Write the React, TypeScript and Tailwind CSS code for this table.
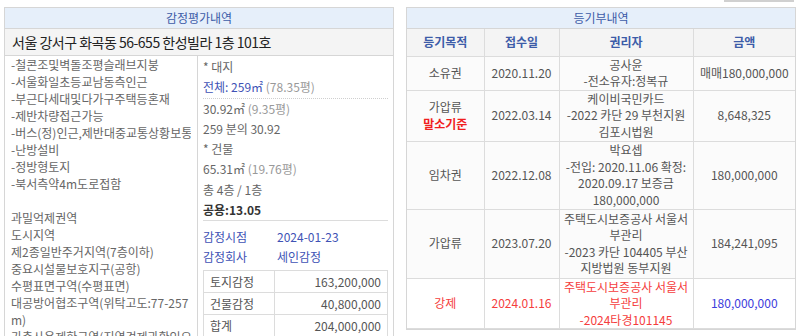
import React from "react";

const FONT = { fontFamily: '"Noto Sans CJK KR", "Noto Sans", sans-serif' };

const LEFT_LIST = [
  "-철콘조및벽돌조평슬래브지붕",
  "-서울화일초등교남동측인근",
  "-부근다세대및다가구주택등혼재",
  "-제반차량접근가능",
  "-버스(정)인근,제반대중교통상황보통",
  "-난방설비",
  "-정방형토지",
  "-북서측약4m도로접함",
];

const ZONES = [
  "과밀억제권역",
  "도시지역",
  "제2종일반주거지역(7층이하)",
  "중요시설물보호지구(공항)",
  "수평표면구역(수평표면)",
  "대공방어협조구역(위탁고도:77-257",
  "m)",
  "가축사용제한구역(지역경제과확인요",
];

type Row = {
  kind: string[];
  date: string;
  holder: string[];
  amount: string;
  h: string;
  red?: boolean;
};

const ROWS: Row[] = [
  {
    kind: ["소유권"],
    date: "2020.11.20",
    holder: ["공사윤", "-전소유자:정복규"],
    amount: "매매180,000,000",
    h: "h-[34px]",
  },
  {
    kind: ["가압류", "말소기준"],
    date: "2022.03.14",
    holder: ["케이비국민카드", "-2022 카단 29 부천지원", "김포시법원"],
    amount: "8,648,325",
    h: "h-[51px]",
  },
  {
    kind: ["임차권"],
    date: "2022.12.08",
    holder: ["박요셉", "-전입: 2020.11.06 확정:", "2020.09.17 보증금", "180,000,000"],
    amount: "180,000,000",
    h: "h-[68px]",
  },
  {
    kind: ["가압류"],
    date: "2023.07.20",
    holder: ["주택도시보증공사 서울서", "부관리", "-2023 카단 104405 부산", "지방법원 동부지원"],
    amount: "184,241,095",
    h: "h-[69px]",
  },
  {
    kind: ["강제"],
    date: "2024.01.16",
    holder: ["주택도시보증공사 서울서", "부관리", "-2024타경101145"],
    amount: "180,000,000",
    h: "h-[50px]",
    red: true,
  },
];

function AppraisalPanel() {
  return (
    <div className="w-[390px] h-[329px] overflow-hidden border border-[#d6d6d6] border-b-0 bg-white">
      <div className="h-[21px] flex items-center justify-center bg-[#e6effa] border-b border-[#d6d6d6] text-[12px] text-[#3d5ca8]">
        감정평가내역
      </div>
      <div className="h-[27px] flex items-center px-[7px] bg-[#f4f4f4] border-b border-[#d6d6d6] text-[14px] tracking-[-0.5px] text-[#222]">
        서울 강서구 화곡동 56-655 한성빌라 1층 101호
      </div>

      <div className="flex">
        {/* left: description + zoning */}
        <div className="w-[193px] shrink-0 border-r border-[#d6d6d6] px-[6px] text-[12px] leading-[17px] text-[#666]">
          {LEFT_LIST.map((t) => (
            <div key={t} className="whitespace-nowrap overflow-hidden">
              {t}
            </div>
          ))}
          <div className="h-[17px]" />
          {ZONES.map((t) => (
            <div key={t} className="whitespace-nowrap overflow-hidden">
              {t}
            </div>
          ))}
        </div>

        {/* right: area + valuation */}
        <div className="flex-1 px-[5px] text-[12px] text-[#666]">
          <div className="leading-[20.3px] pt-[1px]">
            <div>* 대지</div>
            <div className="border-b border-dotted border-[#cfcfcf]">
              <span className="text-[#4052b5]">전체: 259㎡</span>{" "}
              <span className="text-[#999]">(78.35평)</span>
            </div>
            <div>
              30.92㎡ <span className="text-[#999]">(9.35평)</span>
            </div>
            <div>259 분의 30.92</div>
            <div>* 건물</div>
            <div>
              65.31㎡ <span className="text-[#999]">(19.76평)</span>
            </div>
            <div>총 4층 / 1층</div>
            <div className="border-b border-[#dcdcdc] font-semibold text-[#333]">
              공용:13.05
            </div>
          </div>

          <div className="pt-[6px] leading-[20px] text-[#4052b5]">
            <div className="flex">
              <span className="w-[74px]">감정시점</span>
              <span>2024-01-23</span>
            </div>
            <div className="flex">
              <span className="w-[74px]">감정회사</span>
              <span>세인감정</span>
            </div>
          </div>

          <table className="mt-[3px] w-full border-collapse table-fixed text-[12px] text-[#555]">
            <tbody>
              {[
                ["토지감정", "163,200,000"],
                ["건물감정", "40,800,000"],
                ["합계", "204,000,000"],
              ].map(([k, v]) => (
                <tr key={k} className="h-[22px]">
                  <td className="w-[71px] border border-[#dcdcdc] px-[6px] py-0">{k}</td>
                  <td className="border border-[#dcdcdc] px-[6px] py-0 text-right">{v}</td>
                </tr>
              ))}
            </tbody>
          </table>
        </div>
      </div>
    </div>
  );
}

function RegistryPanel() {
  return (
    <div className="w-[390px]">
      <div className="border border-[#d6d6d6] bg-white">
        <div className="h-[21px] flex items-center justify-center bg-[#e6effa] border-b border-[#d6d6d6] text-[12px] text-[#3d5ca8]">
          등기부내역
        </div>
        <table className="w-full border-collapse table-fixed text-[12px] leading-[16.5px] text-[#555]">
          <thead>
            <tr className="h-[27px] bg-[#f4f4f4] text-[#3d5ca8]">
              <th className="w-[77px] p-0 border-r border-b border-[#dcdcdc] font-semibold">등기목적</th>
              <th className="w-[75px] p-0 border-r border-b border-[#dcdcdc] font-semibold">접수일</th>
              <th className="w-[134px] p-0 border-r border-b border-[#dcdcdc] font-semibold">권리자</th>
              <th className="p-0 border-b border-[#dcdcdc] font-semibold">금액</th>
            </tr>
          </thead>
          <tbody>
            {ROWS.map((r) => (
              <tr
                key={r.date}
                className={`${r.h} text-center ${r.red ? "bg-white text-[#f53d3d]" : "bg-[#fbfbfb]"}`}
              >
                <td className="p-0 border-r border-b border-[#dcdcdc]">
                  <div>{r.kind[0]}</div>
                  {r.kind[1] && <div className="text-[#f01e1e] font-bold">{r.kind[1]}</div>}
                </td>
                <td className="p-0 border-r border-b border-[#dcdcdc]">{r.date}</td>
                <td className="p-0 border-r border-b border-[#dcdcdc]">
                  {r.holder.map((l) => (
                    <div key={l} className="whitespace-nowrap">
                      {l}
                    </div>
                  ))}
                </td>
                <td className={`p-0 border-b border-[#dcdcdc] ${r.red ? "text-[#3c3cdc]" : ""}`}>
                  {r.amount}
                </td>
              </tr>
            ))}
          </tbody>
        </table>
      </div>
    </div>
  );
}

export default function App() {
  return (
    <div className="w-[800px] h-[336px] overflow-hidden bg-white" style={FONT}>
      <div className="h-[7px] flex justify-end pr-[6px]">
        <div className="w-[70px] h-[2px] bg-[#d0d0d0]" />
      </div>
      <div className="flex gap-[12px] pl-[4px]">
        <AppraisalPanel />
        <RegistryPanel />
      </div>
    </div>
  );
}
